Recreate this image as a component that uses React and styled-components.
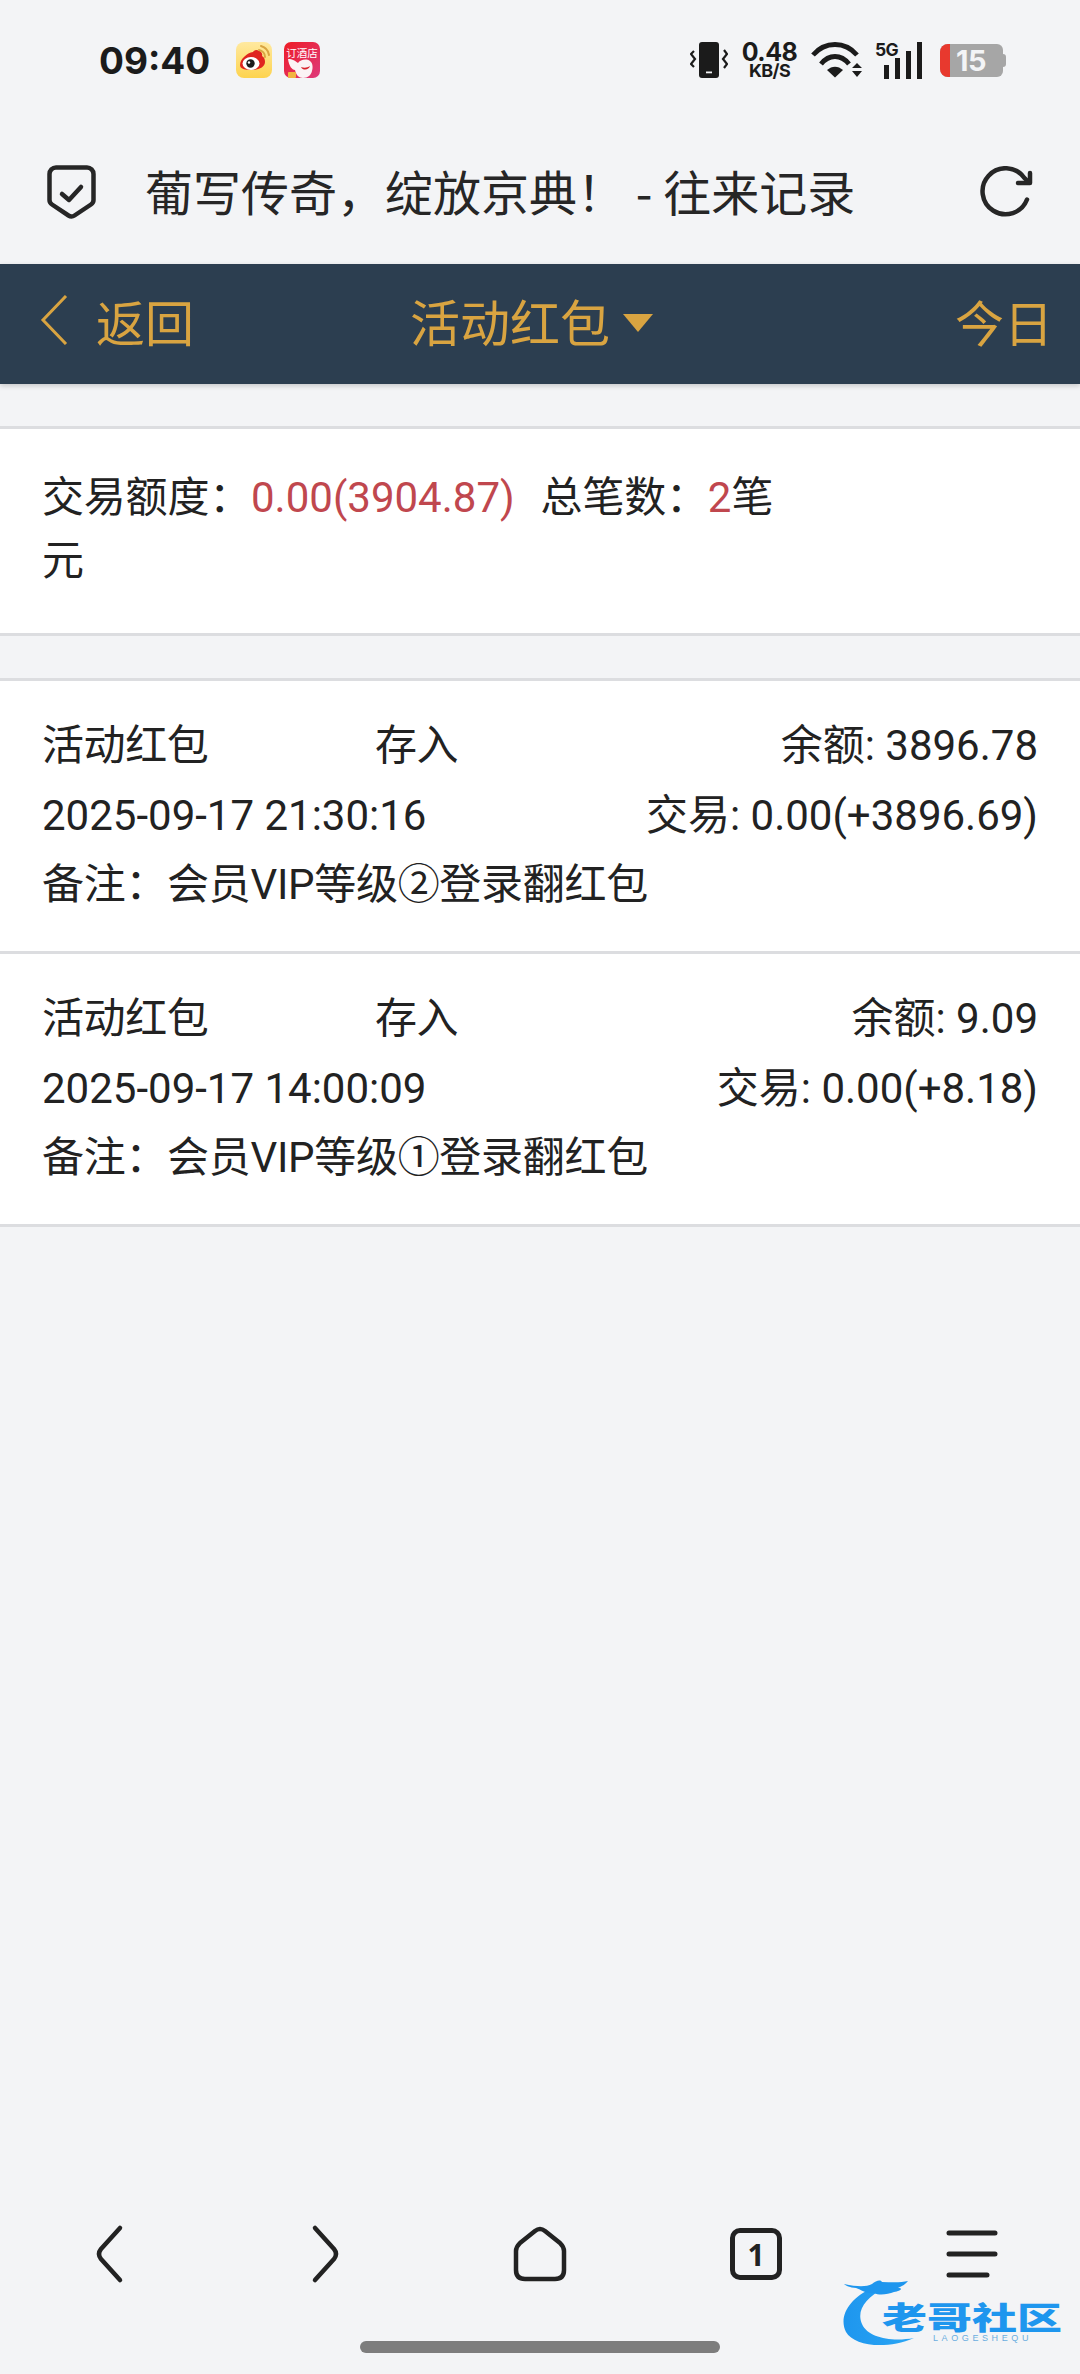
import React from "react";
import styled, { createGlobalStyle } from "styled-components";

const Global = createGlobalStyle`
  html, body { margin: 0; padding: 0; background: #f3f4f6; }
  * { box-sizing: border-box; }
`;
const SANS = `Roboto, "Noto Sans CJK SC", sans-serif`;

const Page = styled.div`
  position: relative; width: 1080px; height: 2374px; background: #f3f4f6;
  display: flex; flex-direction: column; overflow: hidden;
  font-family: ${SANS}; color: #222;
`;
const StatusBar = styled.div`
  height: 120px; display: flex; align-items: center; padding: 0 77px 0 99px;
`;
const Time = styled.div`
  font-family: Inter, sans-serif; font-weight: 700; font-size: 37px; color: #1b1b1b; width: 137px;
`;
const AppIcons = styled.div`display: flex; gap: 12px; margin-right: auto;`;
const AppIcon = styled.svg`width: 36px; height: 36px; display: block;`;
const StatusRight = styled.div`display: flex; align-items: center;`;
const Speed = styled.div`
  display: flex; flex-direction: column; align-items: center; width: 57px; margin: 0 13px;
  font-family: Inter, sans-serif; font-weight: 700; color: #1b1b1b;
`;
const SpeedValue = styled.span`font-size: 25px; line-height: 22px; letter-spacing: -0.5px;`;
const SpeedUnit = styled.span`font-size: 18px; line-height: 16px; white-space: nowrap; letter-spacing: -0.6px;`;
const Battery = styled.div`
  position: relative; width: 63px; height: 33px; margin-left: 17px; display: flex; align-items: center;
  background: #a6a6a6; border-radius: 8px 6px 6px 8px;
`;
const BatteryRed = styled.div`width: 10px; height: 100%; background: #e8392e; border-radius: 8px 0 0 8px;`;
const BatteryText = styled.span`
  font-family: Inter, sans-serif; font-weight: 700; font-size: 29px; color: #f3f4f6; margin-left: 6px; letter-spacing: -0.5px;
`;
const BatteryCap = styled.div`
  position: absolute; right: -3px; top: 10px; width: 3px; height: 13px; background: #a6a6a6; border-radius: 0 3px 3px 0;
`;
const TitleBar = styled.div`
  height: 144px; display: flex; align-items: center; padding: 0 46px 0 47px;
`;
const TitleText = styled.div`
  flex: 1; margin: 0 0 5px 49px; font-size: 48px; color: #262626; white-space: pre; font-family: "Noto Sans CJK SC", sans-serif; font-weight: 400;
`;
const NavBar = styled.div`
  height: 120px; background: #2c3e50; display: grid; grid-template-columns: 1fr auto 1fr; align-items: center;
  padding: 0 27px 8px 40px; box-shadow: 0 2px 5px rgba(0,0,0,.18); color: #d9a441;
  font-family: "Noto Sans CJK SC", sans-serif; font-size: 49px;
`;
const NavBack = styled.div`display: flex; align-items: center; gap: 28px;`;
const NavCenter = styled.div`display: flex; align-items: center; gap: 13px; margin-right: 30px; font-size: 50px;`;
const NavRight = styled.div`justify-self: end;`;
const Triangle = styled.div`
  width: 0; height: 0; border-left: 15px solid transparent; border-right: 15px solid transparent; border-top: 18px solid #d9a441; margin-top: 6px;
`;
const Summary = styled.div`
  margin-top: 42px; background: #fff; border-top: 3px solid #dcdde0; border-bottom: 3px solid #dcdde0;
  padding: 37px 42px 41px; font-size: 42px; line-height: 63px; letter-spacing: -0.2px;
`;
const Red = styled.span`color: #c0474e; letter-spacing: 0;`;
const Gap = styled.span`display: inline-block; width: 26px;`;
const List = styled.div`
  margin-top: 42px; background: #fff; border-top: 3px solid #dcdde0;
`;
const Record = styled.div`
  height: 273px; padding: 35px 42px 0; border-bottom: 3px solid #dcdde0;
  display: grid; grid-template-columns: 333px 1fr auto; grid-auto-rows: 69.5px; align-items: baseline; font-size: 42px; line-height: 60px; color: #222;
`;
const Label = styled.div`letter-spacing: -0.4px; white-space: nowrap;`;
const Right = styled.div`text-align: right; grid-column: 3; white-space: nowrap;`;
const Wide = styled.div`grid-column: 1 / span 2; white-space: nowrap; letter-spacing: ${(p) => p.$tight ? "-0.3px" : "0"};`;
const Spacer = styled.div`flex: 1;`;
const BottomNav = styled.div`
  display: grid; grid-template-columns: repeat(5, 216px); height: 64px; align-items: center; justify-items: center;
`;
const NavIcon = styled.svg`width: 64px; height: 64px; display: block;`;
const TabBox = styled.div`
  width: 52px; height: 52px; border: 5px solid #222; border-radius: 10px; display: flex; align-items: center; justify-content: center;
  font-family: "Noto Sans", sans-serif; font-weight: 700; font-size: 30px; color: #222;
`;
const HomeBar = styled.div`
  width: 360px; height: 12px; border-radius: 6px; background: #7d7d7d; margin: 55px auto 21px;
`;
const Watermark = styled.div`
  position: absolute; left: 842px; top: 2280px; width: 222px; height: 68px;
`;
const WmSwoosh = styled.svg`position: absolute; left: 0; top: 0; width: 222px; height: 68px;`;
const WmTitle = styled.div`
  position: absolute; left: 40px; top: 13px; font-family: "Noto Sans CJK SC", sans-serif; font-weight: 900; font-size: 45px; line-height: 45px;
  color: #1e96ee; white-space: nowrap; transform: scaleY(.68); transform-origin: 0 50%;
`;
const WmSub = styled.div`
  position: absolute; left: 91px; top: 53px; font-family: "Liberation Sans", sans-serif; font-size: 9px; line-height: 10px; letter-spacing: 3.6px; color: #6aaee0; white-space: nowrap;
`;
const SignalSvg = styled.svg`margin-left: 12px; overflow: visible;`;

const Weibo = () => (
  <AppIcon viewBox="0 0 36 36">
    <defs>
      <linearGradient id="wb" x1="0" y1="0" x2="0" y2="1"><stop offset="0" stopColor="#ffe9a0" /><stop offset="1" stopColor="#fdd34e" /></linearGradient>
    </defs>
    <rect width="36" height="36" rx="8" fill="url(#wb)" />
    <path d="M4 23c0-6 7-12 13-13 1-2 4-3 6-1 2 0 4 3 3 5 2 1 3 3 3 6 0 5-6 8-13 8S4 27 4 23z" fill="#e0241f" />
    <ellipse cx="15" cy="21.500" rx="8.500" ry="6.500" fill="#fff" />
    <circle cx="14.500" cy="21.500" r="4.200" fill="#1c1c1c" />
    <circle cx="13" cy="20.500" r="1.200" fill="#fff" />
    <path d="M23 8a7 7 0 0 1 6 7M25 4a11 11 0 0 1 8 9" fill="none" stroke="#d9a441" strokeWidth="2" strokeLinecap="round" />
  </AppIcon>
);
const Hotel = () => (
  <AppIcon viewBox="0 0 36 36">
    <defs>
      <linearGradient id="jd" x1="0" y1="0" x2="1" y2="1"><stop offset="0" stopColor="#ee1c25" /><stop offset="1" stopColor="#de3a7c" /></linearGradient>
    </defs>
    <rect width="36" height="36" rx="7" fill="url(#jd)" />
    <text x="18" y="15" textAnchor="middle" fontSize="10.500" fill="#fff" fontFamily="'Noto Sans CJK SC', sans-serif">订酒店</text>
    <path d="M4 17c5 0 7 2 10 4 2-3 8-5 12-2 3 2 3 7 2 10-1 4-4 7-9 7-4 0-7-3-8-8-3 0-6-4-7-11z" fill="#fbf3f5" />
    <path d="M17 25c3 1 6 1 9-1-1 4-7 5-9 1z" fill="#d6202a" />
    <rect x="4" y="30" width="8" height="6" rx="1" fill="#f2b441" />
  </AppIcon>
);
const Vibrate = () => (
  <svg width="38" height="38" viewBox="0 0 38 38">
    <rect x="9" y="1" width="20" height="36" rx="3" fill="#1b1b1b" />
    <rect x="16" y="30.500" width="6" height="1.800" fill="#f3f4f6" />
    <path d="M4 10l-3 3 4 5-4 5 3 3M34 9l3 4-4 5 4 5-3 4" fill="none" stroke="#1b1b1b" strokeWidth="2.200" />
  </svg>
);
const Wifi = () => (
  <svg width="52" height="36" viewBox="0 0 52 36">
    <path d="M2 13C14 -1 34 -1 46 13M10 22C18 12 30 12 38 22" fill="none" stroke="#1b1b1b" strokeWidth="4.800" />
    <path d="M16 28c5-4.500 11-4.500 16 0l-8 7.500z" fill="#1b1b1b" />
    <path d="M41 26l5-5 5 5zM41 29h10l-5 6z" fill="#1b1b1b" />
  </svg>
);
const Signal = () => (
  <SignalSvg width="48" height="38" viewBox="0 0 48 38">
    <text x="0" y="15" fontSize="17.500" fontWeight="700" fontFamily="Inter, sans-serif" fill="#1b1b1b" letterSpacing="-0.8">5G</text>
    <path d="M9 24h5v14H9zM20 17h5v21h-5zM31 10h5v28h-5zM42 1h5v37h-5z" fill="#1b1b1b" />
  </SignalSvg>
);
const Shield = () => (
  <svg width="49" height="54" viewBox="0 0 49 54" fill="none" stroke="#262626">
    <path d="M9 2.500h31a6.500 6.500 0 0 1 6.500 6.500V35c0 2-1 3.500-2.500 4.500L27.500 50.500c-2 1.300-4 1.300-6 0L5 39.500C3.500 38.500 2.500 37 2.500 35V9A6.500 6.500 0 0 1 9 2.500z" strokeWidth="4.500" />
    <path d="M15 29l7 6L34 22" strokeWidth="4.500" strokeLinecap="round" strokeLinejoin="round" />
  </svg>
);
const Refresh = () => (
  <svg width="54" height="52" viewBox="0 0 54 52" fill="none" stroke="#262626" strokeWidth="4.500">
    <path d="M47 33.500A23 23 0 1 1 44 11.500L48 15.500" strokeLinecap="round" />
    <path d="M50 7v10H38" strokeLinecap="round" strokeLinejoin="round" />
  </svg>
);
const StrokePath = ({ d }) => (
  <NavIcon viewBox="0 0 64 64"><path d={d} fill="none" stroke="#222" strokeWidth="4.500" strokeLinecap="round" strokeLinejoin="round" /></NavIcon>
);

const records = [
  { balance: "余额: 3896.78", time: "2025-09-17 21:30:16", trade: "交易: 0.00(+3896.69)", note: "备注：会员VIP等级②登录翻红包" },
  { balance: "余额: 9.09", time: "2025-09-17 14:00:09", trade: "交易: 0.00(+8.18)", note: "备注：会员VIP等级①登录翻红包" },
];

export default function App() {
  return (
    <Page>
      <Global />
      <StatusBar>
        <Time>09:40</Time>
        <AppIcons><Weibo /><Hotel /></AppIcons>
        <StatusRight>
          <Vibrate />
          <Speed><SpeedValue>0.48</SpeedValue><SpeedUnit>KB/S</SpeedUnit></Speed>
          <Wifi />
          <Signal />
          <Battery><BatteryRed /><BatteryText>15</BatteryText><BatteryCap /></Battery>
        </StatusRight>
      </StatusBar>
      <TitleBar>
        <Shield />
        <TitleText>葡写传奇，绽放京典！ - 往来记录</TitleText>
        <Refresh />
      </TitleBar>
      <NavBar>
        <NavBack>
          <svg width="28" height="50" viewBox="0 0 28 50" fill="none" stroke="#d9a441" strokeWidth="3"><path d="M26 1L3 25l23 24" /></svg>
          返回
        </NavBack>
        <NavCenter>活动红包<Triangle /></NavCenter>
        <NavRight>今日</NavRight>
      </NavBar>
      <Summary>
        交易额度：<Red>0.00(3904.87)</Red><Gap />总笔数：<Red>2</Red>笔<br />元
      </Summary>
      <List>
        {records.map((r) => (
          <Record key={r.time}>
            <Label>活动红包</Label><Label>存入</Label><Right>{r.balance}</Right>
            <Wide>{r.time}</Wide><Right>{r.trade}</Right>
            <Wide $tight>{r.note}</Wide>
          </Record>
        ))}
      </List>
      <Spacer />
      <BottomNav>
        <StrokePath d="M44 6 L25 27 Q21 32 25 37 L44 58" />
        <StrokePath d="M23 6 L42 27 Q46 32 42 37 L23 58" />
        <NavIcon viewBox="0 0 64 64"><path d="M27 9 L12 21 Q8 25 8 29 V48 Q8 57 17 57 H47 Q56 57 56 48 V29 Q56 25 52 21 L37 9 Q32 5 27 9z" fill="none" stroke="#222" strokeWidth="4.500" strokeLinejoin="round" /></NavIcon>
        <TabBox>1</TabBox>
        <NavIcon viewBox="0 0 64 64"><path d="M9 11H55M9 32H55M9 53H47" fill="none" stroke="#222" strokeWidth="5" strokeLinecap="round" /></NavIcon>
      </BottomNav>
      <HomeBar />
      <Watermark>
        <WmSwoosh viewBox="0 0 222 68">
          <defs><linearGradient id="wm" x1="0" y1="0" x2="1" y2="0"><stop offset="0" stopColor="#1e96ee" /><stop offset="1" stopColor="#2aa6f5" /></linearGradient></defs>
          <path d="M30 8C8 18 -4 36 4 52c8 14 40 18 68 6C50 62 26 58 20 44 14 30 24 18 42 8z" fill="url(#wm)" />
          <path d="M2 4c14 3 22 3 28 0 4-3 8-5 10-2 8 0 18 1 26 -1-2 3-6 5-10 7 6 0 2 3-4 4-6 2-14 4-20 1-8 1-12-3-18-5C10 8 4 6 2 4z" fill="#1e96ee" />
        </WmSwoosh>
        <WmTitle>老哥社区</WmTitle>
        <WmSub>LAOGESHEQU</WmSub>
      </Watermark>
    </Page>
  );
}
